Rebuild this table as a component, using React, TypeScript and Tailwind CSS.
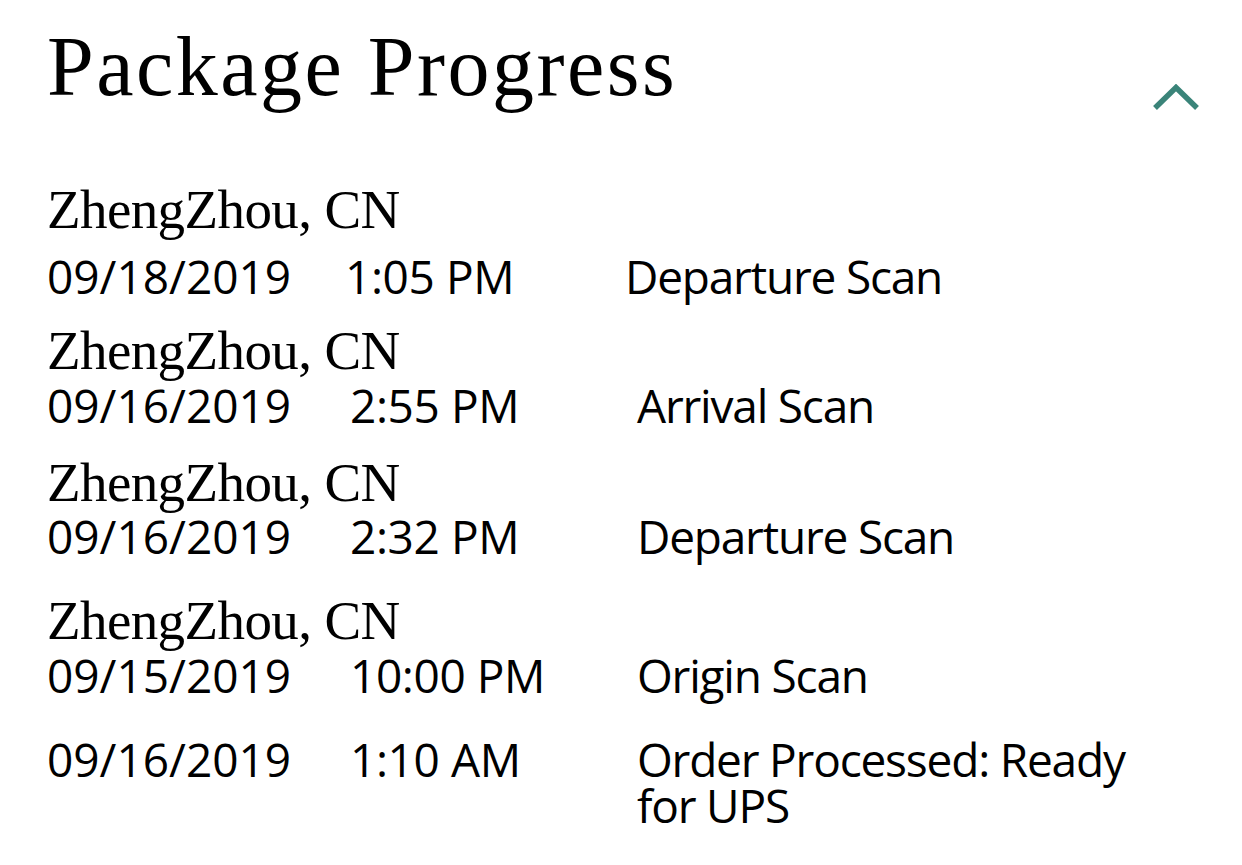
import React from "react";

const serif = { fontFamily: '"Liberation Serif", "Times New Roman", serif' };
const sans = { fontFamily: '"Open Sans", "Noto Sans", sans-serif' };

type Row = {
  location?: string;
  date: string;
  time: string;
  desc: React.ReactNode;
  locMt: string;
  dateMt: string;
  timeCol: string;
  descCol: string;
};

const rows: Row[] = [
  {
    location: "ZhengZhou, CN",
    date: "09/18/2019",
    time: "1:05 PM",
    desc: "Departure Scan",
    locMt: "mt-[68px]",
    dateMt: "mt-[15px]",
    timeCol: "w-[298px]",
    descCol: "w-[280px]",
  },
  {
    location: "ZhengZhou, CN",
    date: "09/16/2019",
    time: "2:55 PM",
    desc: "Arrival Scan",
    locMt: "mt-[24px]",
    dateMt: "mt-[3px]",
    timeCol: "w-[303px]",
    descCol: "w-[287px]",
  },
  {
    location: "ZhengZhou, CN",
    date: "09/16/2019",
    time: "2:32 PM",
    desc: "Departure Scan",
    locMt: "mt-[27px]",
    dateMt: "mt-[2px]",
    timeCol: "w-[303px]",
    descCol: "w-[287px]",
  },
  {
    location: "ZhengZhou, CN",
    date: "09/15/2019",
    time: "10:00 PM",
    desc: "Origin Scan",
    locMt: "mt-[34px]",
    dateMt: "mt-[3px]",
    timeCol: "w-[303px]",
    descCol: "w-[287px]",
  },
  {
    date: "09/16/2019",
    time: "1:10 AM",
    desc: (
      <>
        Order Processed: Ready
        <br />
        for UPS
      </>
    ),
    locMt: "",
    dateMt: "mt-[38px]",
    timeCol: "w-[303px]",
    descCol: "w-[287px]",
  },
];

export default function App() {
  return (
    <div className="min-h-[865px] w-full bg-white text-black">
      <div className="pl-[47px] pr-[42px] pt-[25px]">
        <div className="flex items-start justify-between">
          <h1
            className="text-[84px] leading-[84px] font-normal tracking-[2.5px]"
            style={serif}
          >
            Package Progress
          </h1>
          <svg
            width="48"
            height="30"
            viewBox="0 0 48 30"
            className="mt-[59px]"
            aria-hidden
          >
            <polyline
              points="3,24 24,3.5 45,24"
              fill="none"
              stroke="#3a8479"
              strokeWidth="5.5"
              strokeLinecap="butt"
              strokeLinejoin="miter"
            />
          </svg>
        </div>

        <div>
          {rows.map((r, i) => (
            <div key={i}>
              {r.location && (
                <div
                  className={`${r.locMt} text-[55px] leading-[56px] tracking-[-0.6px]`}
                  style={serif}
                >
                  {r.location}
                </div>
              )}
              <div
                className={`${r.dateMt} flex items-start text-[46px] leading-[46px]`}
                style={sans}
              >
                <div className={`${r.timeCol} shrink-0 tracking-[0px]`}>
                  {r.date}
                </div>
                <div className={`${r.descCol} shrink-0 tracking-[-0.4px]`}>
                  {r.time}
                </div>
                <div className="tracking-[-1.2px]">{r.desc}</div>
              </div>
            </div>
          ))}
        </div>
      </div>
    </div>
  );
}
